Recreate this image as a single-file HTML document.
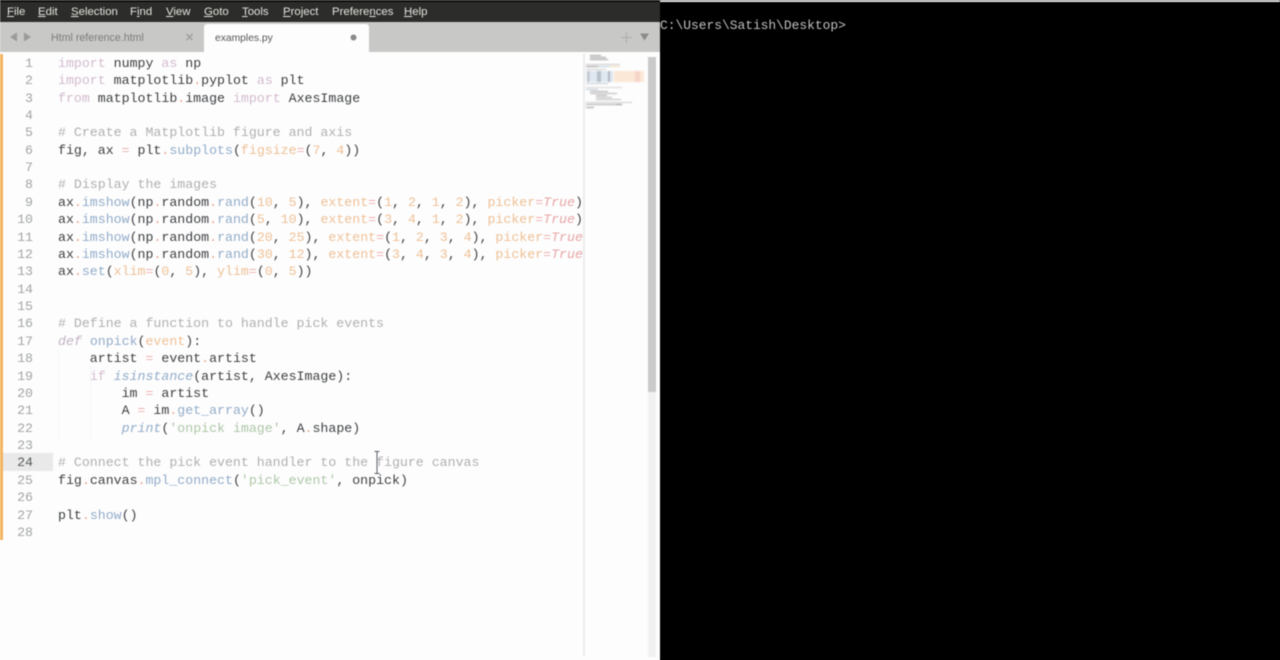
<!DOCTYPE html>
<html><head><meta charset="utf-8"><style>
html,body{margin:0;padding:0;width:1280px;height:660px;overflow:hidden;background:linear-gradient(90deg,#fdfdfd 660px,#000 660px)}
*{box-sizing:border-box}
.a{position:absolute}
#root{position:absolute;left:0;top:0;width:1280px;height:660px;overflow:hidden;filter:blur(.45px)}
.menu span{position:absolute;top:4.500px;font:11.4px/15px "Liberation Sans",sans-serif;color:#e4e4e0;white-space:pre}
.l{position:absolute;left:58px;height:17px;margin-top:.4px;font:13.25px/17px "Liberation Mono",monospace;color:#3e4043;white-space:pre;width:525px;overflow:hidden}
.n{position:absolute;left:0;width:33px;margin-top:.4px;text-align:right;height:17px;font:13.25px/17px "Liberation Mono",monospace;color:#a2a4a6}
.k{color:#d3bbce}.c{color:#b0b0b0}.f{color:#92acca}.o{color:#efc096}.p{color:#eeb0b0}.d{color:#e8a58c}.s{color:#adc7a8}
.t{color:#e8a5a5;font-style:italic}.fi{color:#92acca;font-style:italic}.ki{color:#c3b2c4;font-style:italic}
</style></head><body><div id="root">
<div class="a" style="left:0;top:0;width:660px;height:660px;background:#fdfdfd"></div>
<div class="a" style="left:660px;top:0;width:620px;height:660px;background:#000"></div>
<div class="a" style="left:660px;top:0;width:620px;height:2px;background:#e8e8e8"></div>
<div class="a" style="left:660px;top:18px;font:12.92px/15px 'Liberation Mono',monospace;color:#c0c0c0;white-space:pre">C:\Users\Satish\Desktop&gt;</div>

<div class="a" style="left:0;top:0;width:660px;height:2px;background:#0c0c0c"></div>
<div class="a" style="left:0;top:2px;width:660px;height:20px;background:#2c2c2a"></div>
<div class="a menu" style="left:0;top:0;width:660px;height:22px">
<span style="left:7px"><u>F</u>ile</span><span style="left:38px"><u>E</u>dit</span><span style="left:71px"><u>S</u>election</span><span style="left:130px">F<u>i</u>nd</span><span style="left:166px"><u>V</u>iew</span><span style="left:204px"><u>G</u>oto</span><span style="left:242px"><u>T</u>ools</span><span style="left:283px"><u>P</u>roject</span><span style="left:332px">Prefere<u>n</u>ces</span><span style="left:404px"><u>H</u>elp</span>
</div>

<div class="a" style="left:0;top:22px;width:660px;height:30px;background:#c8c8c6"></div>
<div class="a" style="left:204px;top:24px;width:165px;height:28px;background:#fdfdfd;border-radius:3px 3px 0 0"></div>
<svg class="a" style="left:0;top:22px" width="660" height="30">
<path d="M10 15l7-4.500v9z M24 10.500l7 4.500-7 4.500z" fill="#9a9a9a"/>
<path d="M186.500 12l6 6M192.500 12l-6 6" stroke="#9c9c9c" stroke-width="1.300" fill="none"/>
<circle cx="353.500" cy="15.500" r="3" fill="#8a8a8a"/>
<path d="M626.500 10v11M621 15.500h11" stroke="#b4b4b2" stroke-width="1.500" fill="none"/>
<path d="M640 11.500h9l-4.500 7z" fill="#8c8c8c"/>
</svg>
<div class="a" style="left:51px;top:30.500px;font:10.650px/15px 'Liberation Sans',sans-serif;color:#7c7c7c;white-space:pre">Html reference.html</div>
<div class="a" style="left:215px;top:30.500px;font:10.300px/15px 'Liberation Sans',sans-serif;color:#555;white-space:pre">examples.py</div>

<div class="a" style="left:0;top:54px;width:3px;height:486px;background:#f3b25e"></div>
<div class="a" style="left:3px;top:453px;width:50px;height:18px;background:#e9e9e9"></div>

<div class="a" style="left:90px;top:367px;width:1px;height:70px;border-left:1px dotted #eee"></div>
<div class="a" style="left:58px;top:350px;width:1px;height:87px;border-left:1px dotted #eee"></div>

<div class="n" style="top:54.500px">1</div><div class="l" style="top:54.500px"><span class="k">import</span> numpy <span class="k">as</span> np</div>
<div class="n" style="top:71.900px">2</div><div class="l" style="top:71.900px"><span class="k">import</span> matplotlib<span class="d">.</span>pyplot <span class="k">as</span> plt</div>
<div class="n" style="top:89.200px">3</div><div class="l" style="top:89.200px"><span class="k">from</span> matplotlib<span class="d">.</span>image <span class="k">import</span> AxesImage</div>
<div class="n" style="top:106.600px">4</div>
<div class="n" style="top:124px">5</div><div class="l" style="top:124px"><span class="c"># Create a Matplotlib figure and axis</span></div>
<div class="n" style="top:141.400px">6</div><div class="l" style="top:141.400px">fig, ax <span class="p">=</span> plt<span class="d">.</span><span class="f">subplots</span>(<span class="o">figsize</span><span class="p">=</span>(<span class="o">7</span>, <span class="o">4</span>))</div>
<div class="n" style="top:158.700px">7</div>
<div class="n" style="top:176.100px">8</div><div class="l" style="top:176.100px"><span class="c"># Display the images</span></div>
<div class="n" style="top:193.500px">9</div><div class="l" style="top:193.500px">ax<span class="d">.</span><span class="f">imshow</span>(np<span class="d">.</span>random<span class="d">.</span><span class="f">rand</span>(<span class="o">10</span>, <span class="o">5</span>), <span class="o">extent</span><span class="p">=</span>(<span class="o">1</span>, <span class="o">2</span>, <span class="o">1</span>, <span class="o">2</span>), <span class="o">picker</span><span class="p">=</span><span class="t">True</span>)</div>
<div class="n" style="top:210.900px">10</div><div class="l" style="top:210.900px">ax<span class="d">.</span><span class="f">imshow</span>(np<span class="d">.</span>random<span class="d">.</span><span class="f">rand</span>(<span class="o">5</span>, <span class="o">10</span>), <span class="o">extent</span><span class="p">=</span>(<span class="o">3</span>, <span class="o">4</span>, <span class="o">1</span>, <span class="o">2</span>), <span class="o">picker</span><span class="p">=</span><span class="t">True</span>)</div>
<div class="n" style="top:228.200px">11</div><div class="l" style="top:228.200px">ax<span class="d">.</span><span class="f">imshow</span>(np<span class="d">.</span>random<span class="d">.</span><span class="f">rand</span>(<span class="o">20</span>, <span class="o">25</span>), <span class="o">extent</span><span class="p">=</span>(<span class="o">1</span>, <span class="o">2</span>, <span class="o">3</span>, <span class="o">4</span>), <span class="o">picker</span><span class="p">=</span><span class="t">True</span>)</div>
<div class="n" style="top:245.600px">12</div><div class="l" style="top:245.600px">ax<span class="d">.</span><span class="f">imshow</span>(np<span class="d">.</span>random<span class="d">.</span><span class="f">rand</span>(<span class="o">30</span>, <span class="o">12</span>), <span class="o">extent</span><span class="p">=</span>(<span class="o">3</span>, <span class="o">4</span>, <span class="o">3</span>, <span class="o">4</span>), <span class="o">picker</span><span class="p">=</span><span class="t">True</span>)</div>
<div class="n" style="top:263px">13</div><div class="l" style="top:263px">ax<span class="d">.</span><span class="f">set</span>(<span class="o">xlim</span><span class="p">=</span>(<span class="o">0</span>, <span class="o">5</span>), <span class="o">ylim</span><span class="p">=</span>(<span class="o">0</span>, <span class="o">5</span>))</div>
<div class="n" style="top:280.400px">14</div>
<div class="n" style="top:297.700px">15</div>
<div class="n" style="top:315.100px">16</div><div class="l" style="top:315.100px"><span class="c"># Define a function to handle pick events</span></div>
<div class="n" style="top:332.500px">17</div><div class="l" style="top:332.500px"><span class="ki">def</span> <span class="f">onpick</span>(<span class="o">event</span>):</div>
<div class="n" style="top:349.900px">18</div><div class="l" style="top:349.900px">    artist <span class="p">=</span> event<span class="d">.</span>artist</div>
<div class="n" style="top:367.200px">19</div><div class="l" style="top:367.200px">    <span class="k">if</span> <span class="fi">isinstance</span>(artist, AxesImage):</div>
<div class="n" style="top:384.600px">20</div><div class="l" style="top:384.600px">        im <span class="p">=</span> artist</div>
<div class="n" style="top:402px">21</div><div class="l" style="top:402px">        A <span class="p">=</span> im<span class="d">.</span><span class="f">get_array</span>()</div>
<div class="n" style="top:419.400px">22</div><div class="l" style="top:419.400px">        <span class="fi">print</span>(<span class="s">'onpick image'</span>, A<span class="d">.</span>shape)</div>
<div class="n" style="top:436.700px">23</div>
<div class="n" style="top:454.100px;color:#55585b">24</div><div class="l" style="top:454.100px"><span class="c"># Connect the pick event handler to the figure canvas</span></div>
<div class="n" style="top:471.500px">25</div><div class="l" style="top:471.500px">fig<span class="d">.</span>canvas<span class="d">.</span><span class="f">mpl_connect</span>(<span class="s">'pick_event'</span>, onpick)</div>
<div class="n" style="top:488.900px">26</div>
<div class="n" style="top:506.200px">27</div><div class="l" style="top:506.200px">plt<span class="d">.</span><span class="f">show</span>()</div>
<div class="n" style="top:523.600px">28</div>

<svg class="a" style="left:372px;top:450px" width="10" height="26"><path d="M2.500 1.500h5M5 1.500v22M2.500 23.500h5" stroke="#5a6068" stroke-width="1" fill="none"/></svg>

<div class="a" style="left:583px;top:54px;width:2px;height:602px;background:#ececec"></div>
<div class="a" style="left:648px;top:57px;width:8px;height:600px;background:#f1f1f1"></div>
<div class="a" style="left:648px;top:57px;width:8px;height:335px;background:#cacaca"></div>

<svg class="a" style="left:585px;top:54px;filter:blur(.4px)" width="62" height="56">
<g fill="#9a9a9a"><rect x="5" y="1" width="11" height="1"/><rect x="5" y="3" width="16" height="1"/><rect x="5" y="5" width="18" height="1"/></g>
<rect x="1" y="10" width="34" height="1" fill="#c8c8c8"/>
<rect x="1" y="12" width="12" height="1" fill="#999"/><rect x="13" y="12" width="12" height="1" fill="#bdd0e4"/><rect x="25" y="12" width="10" height="1" fill="#f4d8ae"/>
<rect x="1" y="15" width="20" height="1" fill="#ccc"/>
<g fill="#dfe7f1"><rect x="1" y="17" width="27" height="11"/></g>
<rect x="3" y="17" width="1" height="11" fill="#a0a0a0"/><rect x="12" y="17" width="4" height="11" fill="#b6bfca"/><rect x="23" y="17" width="2" height="11" fill="#b0b6c0"/>
<rect x="29" y="17" width="30" height="11" fill="#fbe8d6"/><rect x="50" y="17" width="5" height="11" fill="#f7d4ca"/>
<rect x="1" y="29" width="22" height="1" fill="#c2cad4"/>
<rect x="1" y="33" width="36" height="1" fill="#d4d4d4"/>
<rect x="1" y="35" width="12" height="1" fill="#bcc4d0"/><rect x="5" y="37" width="18" height="1" fill="#a8a8a8"/><rect x="5" y="39" width="27" height="1" fill="#b4b4b4"/>
<rect x="11" y="41" width="11" height="1" fill="#a8a8a8"/><rect x="11" y="43" width="16" height="1" fill="#b4b4b4"/><rect x="11" y="45" width="25" height="1" fill="#bbb"/>
<rect x="1" y="48" width="46" height="1" fill="#ccc"/><rect x="1" y="50" width="30" height="1" fill="#a8a8a8"/><rect x="31" y="50" width="6" height="1" fill="#888"/>
<rect x="1" y="53" width="8" height="1" fill="#999"/>
</svg>
</div></body></html>
